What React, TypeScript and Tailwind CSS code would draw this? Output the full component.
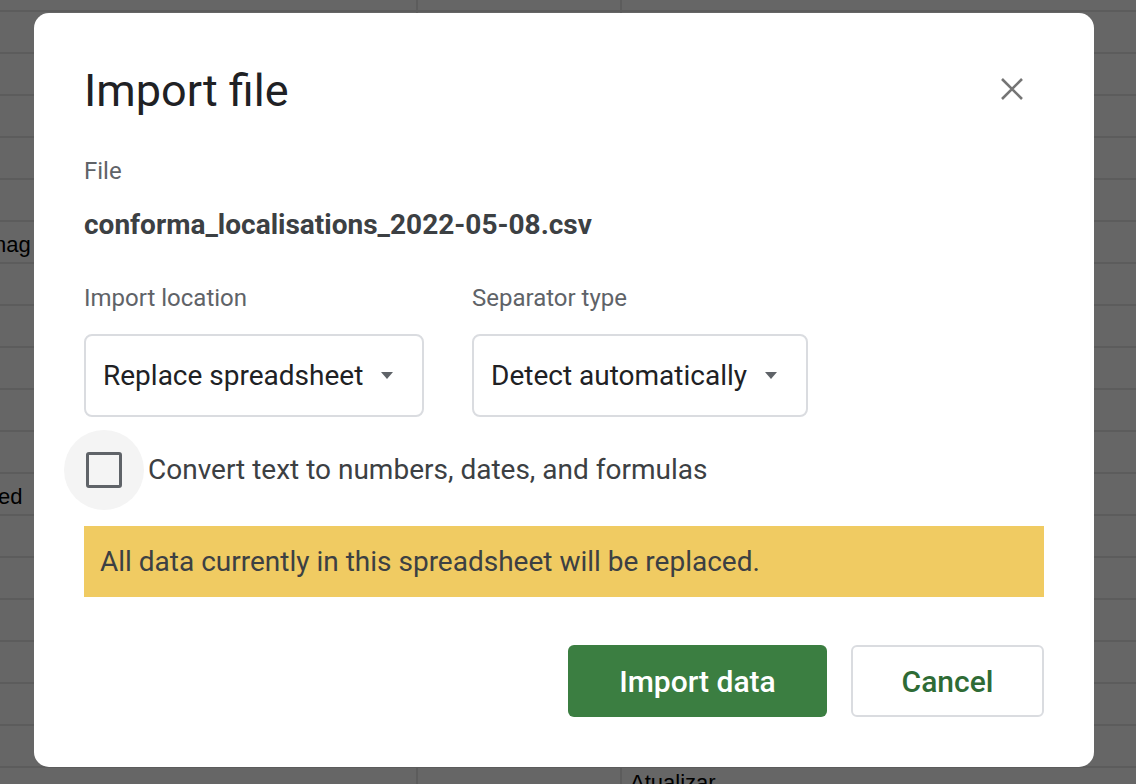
import React from 'react';

const rows = Array.from({ length: 19 }, (_, i) => i);

const Caret = () => (
  <svg width="16" height="8" viewBox="0 0 16 8" className="shrink-0">
    <path d="M2 0 L14 0 L8 7 Z" fill="#5f6368" />
  </svg>
);

const Select: React.FC<{ label: string; value: string; width: string }> = ({ label, value, width }) => (
  <div className="flex flex-col">
    <div className="text-[24px] leading-[28px] text-[#5f6368]">{label}</div>
    <div
      className={`mt-[22px] flex h-[83px] items-center gap-[16px] rounded-[8px] border-2 border-[#dadce0] pl-[17px] pr-[20px] ${width}`}>
      <span className="whitespace-nowrap text-[28px] text-[#202124]">{value}</span>
      <Caret />
    </div>
  </div>
);

export default function App() {
  return (
    <div
      className="relative h-[784px] w-[1136px] overflow-hidden bg-[#666666]"
      style={{ fontFamily: 'Roboto, "Liberation Sans", sans-serif' }}>
      {/* spreadsheet behind the overlay */}
      <div className="absolute inset-0">
        {rows.map((i) => (
          <div
            key={i}
            className="absolute left-0 right-0 h-[2px] bg-[#5c5c5c]"
            style={{ top: 10 + i * 42 }}
          />
        ))}
        <div className="absolute bottom-0 left-[416px] top-0 w-[2px] bg-[#5c5c5c]" />
        <div className="absolute bottom-0 left-[620px] top-0 w-[2px] bg-[#5c5c5c]" />
        <div
          className="absolute left-[-6px] top-[228px] text-[22px] text-black"
          style={{ fontFamily: '"Liberation Sans", sans-serif' }}>
          nag
        </div>
        <div
          className="absolute left-[-2px] top-[480px] text-[22px] text-black"
          style={{ fontFamily: '"Liberation Sans", sans-serif' }}>
          ed
        </div>
        <div
          className="absolute left-[630px] top-[766px] text-[22px] text-black"
          style={{ fontFamily: '"Liberation Sans", sans-serif' }}>
          Atualizar
        </div>
      </div>

      {/* dialog */}
      <div className="absolute left-[34px] top-[13px] flex h-[754px] w-[1060px] flex-col rounded-[15px] bg-white px-[50px] pt-[54px]">
        <div className="flex items-start justify-between">
          <h1 className="text-[45px] leading-[48px] text-[#202124]">Import file</h1>
          <button className="mr-[20px] mt-[10px] p-0">
            <svg width="24" height="24" viewBox="0 0 24 24">
              <path d="M2 2 L22 22 M22 2 L2 22" stroke="#757575" strokeWidth="2.6" />
            </svg>
          </button>
        </div>

        <div className="mt-[42px] text-[24px] leading-[28px] text-[#5f6368]">File</div>
        <div className="mt-[24px] text-[28px] font-bold leading-[32px] text-[#3c4043]">
          conforma_localisations_2022-05-08.csv
        </div>

        <div className="mt-[43px] flex gap-[48px]">
          <Select label="Import location" value="Replace spreadsheet" width="w-[340px]" />
          <Select label="Separator type" value="Detect automatically" width="w-[336px]" />
        </div>

        <div className="mt-[13px] flex items-center">
          <div className="ml-[-20px] flex h-[80px] w-[80px] items-center justify-center rounded-full bg-[#f4f4f4]">
            <div className="h-[36px] w-[36px] rounded-[3px] border-[3px] border-[#5f6368]" />
          </div>
          <span className="ml-[4px] text-[28px] text-[#3c4043]">
            Convert text to numbers, dates, and formulas
          </span>
        </div>

        <div className="mt-[16px] flex h-[71px] items-center bg-[#f0cb62] px-[16px] text-[28px] text-[#3c4043]">
          All data currently in this spreadsheet will be replaced.
        </div>

        <div className="mt-[48px] flex justify-end gap-[24px]">
          <button className="h-[72px] w-[259px] rounded-[6px] bg-[#3b7e41] text-[30px] font-medium text-white">
            Import data
          </button>
          <button className="h-[72px] w-[193px] rounded-[6px] border-2 border-[#dadce0] bg-white text-[30px] font-medium text-[#2e6b35]">
            Cancel
          </button>
        </div>
      </div>
    </div>
  );
}
